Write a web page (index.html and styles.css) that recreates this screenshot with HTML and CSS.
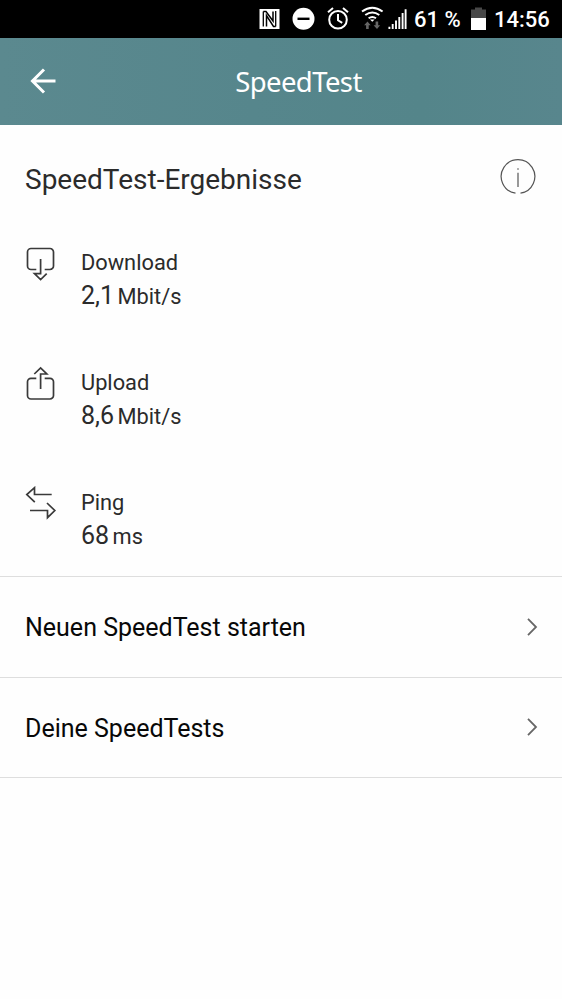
FILE: index.html
```html
<!DOCTYPE html>
<html lang="de">
<head>
<meta charset="utf-8">
<title>SpeedTest</title>
<link rel="stylesheet" href="styles.css">
</head>
<body>
<div class="status">
  <svg class="status-icons" width="150" height="37" viewBox="0 0 150 37">
    <rect x="0.5" y="9" width="20" height="20" fill="#fff"/>
    <path d="M4.300 26.500V11.500M16.700 11V26.500" fill="none" stroke="#000" stroke-width="1.300"/>
    <path d="M4.300 11.500H7L14 21V11.500M7.500 26.500V15.500L14.500 26.500H16.700" fill="none" stroke="#000" stroke-width="1.500"/>
    <circle cx="44.5" cy="18.8" r="11" fill="#fff"/>
    <path d="M38.5 18.8h12" stroke="#000" stroke-width="2.4"/>
    <g fill="none" stroke="#fff" stroke-width="2">
      <circle cx="79" cy="19.7" r="8.8"/>
      <path d="M79 14v6.3l4.2 2.6M69 12.2l5-4.2M89 12.2l-5-4.2"/>
      <path d="M103 11.5q10.3-7.6 20.6 0M106.3 15q7-5.2 14 0M109.6 18.2q3.7-2.6 7.4 0"/>
    </g>
    <path d="M111 19.5h4.6l-2.3 2.2z" fill="#fff"/>
    <path d="M108.5 21.500l3.2 3.8h-2v3.700h-2.600v-3.700h-2zM118 29l3.2-3.8h-2V21.500h-2.600v3.700h-2z" fill="#666"/>
    <path d="M130.4 29v-2.2M133.7 29v-5M137 29v-8.5M140.3 29v-12M143.6 29V13M146.6 29V9.3" stroke="#fff" stroke-width="1.9"/>
  </svg>
  <span class="percent">61 %</span>
  <svg class="battery" width="16" height="24" viewBox="0 0 16 24"><path d="M0 2.5h4V.5h7v2h4V12H0z" fill="#484848"/><path d="M0 11h15v12H0z" fill="#fff"/></svg>
  <span class="clock">14:56</span>
</div>
<header class="bar">
  <svg class="back" width="28" height="28" viewBox="0 0 28 28"><path d="M26.5 14H3M15 2.500L3.5 14 15 25.500" fill="none" stroke="#fff" stroke-width="3"/></svg>
  <h1>SpeedTest</h1>
</header>
<main>
  <section class="results">
    <div class="heading">
      <h2>SpeedTest-Ergebnisse</h2>
      <svg width="36" height="36" viewBox="0 0 36 36" fill="none" stroke="#555" stroke-width="1.2"><path d="M15.5 34.100A16.8 16.8 0 1 1 20.5 34.100M18 13.8V28M18 9.3v1.4"/></svg>
    </div>
    <div class="metric">
      <svg width="32" height="36" viewBox="0 0 32 36"><path d="M11.3 23.5H6a3.5 3.5 0 0 1-3.5-3.5V6A3.5 3.5 0 0 1 6 2.500H25A3.500 3.500 0 0 1 28.500 6V20a3.500 3.500 0 0 1-3.500 3.500h-5.300M15.600 13V27.700H9.500L15.600 33.500 21.700 27.700"/></svg>
      <div><p>Download</p><p><b>2,1</b>Mbit/s</p></div>
    </div>
    <div class="metric">
      <svg width="32" height="36" viewBox="0 0 32 36"><path d="M11.3 12.300H6A3.500 3.500 0 0 0 2.500 15.800V29.500A3.500 3.500 0 0 0 6 33H25a3.500 3.500 0 0 0 3.500-3.500V15.800A3.500 3.500 0 0 0 25 12.300h-5.300M15.600 23V8H21.800L15.600 2 9.300 8"/></svg>
      <div><p>Upload</p><p><b>8,6</b>Mbit/s</p></div>
    </div>
    <div class="metric">
      <svg width="32" height="36" viewBox="0 0 32 36"><path d="M26.700 8.500H9.500V1.700L1.800 8.500 9.800 16.200M5 24.500H22.500V31.700L29.800 24.500 22 17"/></svg>
      <div><p>Ping</p><p><b>68</b>ms</p></div>
    </div>
  </section>
  <nav>
    <a><span>Neuen SpeedTest starten</span><svg width="12" height="20" viewBox="0 0 12 20"><path d="M2 1.800L10 10 2 18.200"/></svg></a>
    <a><span>Deine SpeedTests</span><svg width="12" height="20" viewBox="0 0 12 20"><path d="M2 1.800L10 10 2 18.200"/></svg></a>
  </nav>
</main>
</body>
</html>
```

FILE: styles.css
```css
* { box-sizing: border-box; }
body { margin: 0; min-height: 999px; background: #fefefe; font-family: Roboto, sans-serif; color: #2b2b2b; }
h1, h2, p { margin: 0; font-weight: 400; }
svg { display: block; flex: none; }

.status { display: flex; height: 38px; padding-left: 259px; background: #000; color: #fff; font-size: 22px; font-weight: 500; line-height: 39px; white-space: nowrap; }
.percent { width: 62px; margin-left: 5px; }
.battery { margin-top: 7px; margin-left: -5px; }
.clock { margin-left: 7px; }

.bar { display: grid; grid-template-columns: 90px 1fr 55px; align-items: center; height: 87px; background: linear-gradient(90deg, #5b898f, #56868c 45%, #54858a 75%, #58868d); color: #fff; }
.back { margin-left: 29px; margin-top: -1px; }
h1 { text-align: center; font-family: "Noto Sans", sans-serif; font-size: 27.500px; letter-spacing: -0.600px; line-height: 40px; }

.results { height: 451px; padding: 32px 25px 0; }
.heading { display: flex; justify-content: space-between; height: 89px; }
.heading h2 { font-size: 28px; line-height: 45px; }
.heading svg { margin: 2px 1px 0 0; }
.metric { display: flex; height: 120px; gap: 24px; }
.metric path { fill: none; stroke: #3a3a3a; stroke-width: 1.700; }
.metric p { font-size: 21.800px; line-height: 32px; white-space: nowrap; }
.metric p:first-child { line-height: 34px; }
.metric b { font-size: 25px; font-weight: 400; margin-right: 3.500px; }

nav a { display: flex; align-items: center; justify-content: space-between; height: 100.500px; padding: 2px 24px 0 25px; border-top: 1px solid #dedede; color: #080808; font-size: 25px; }
nav a:last-child { height: 101.500px; border-bottom: 1px solid #dedede; }
nav svg { margin-top: -2px; }
nav path { fill: none; stroke: #666; stroke-width: 1.800; }
```
